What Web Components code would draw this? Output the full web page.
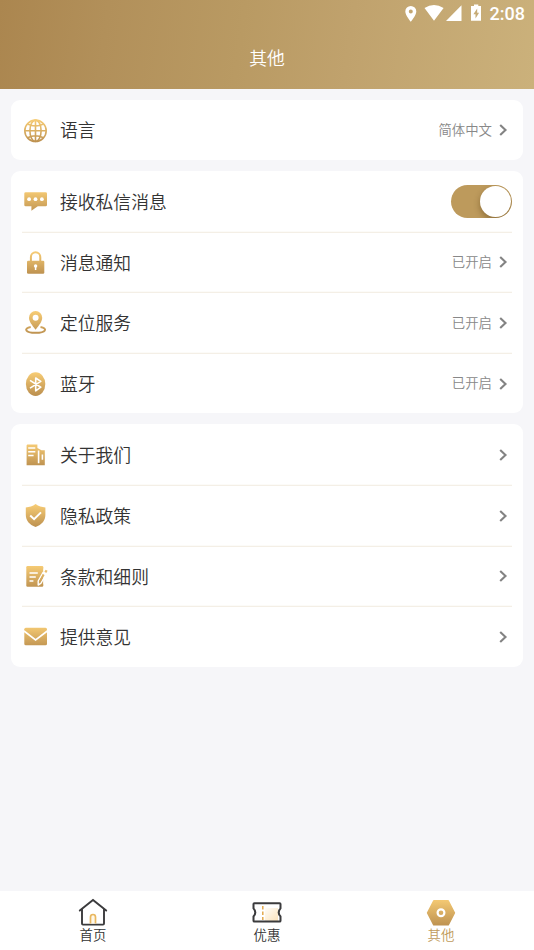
<!DOCTYPE html>
<html lang="zh-CN">
<head>
<meta charset="utf-8">
<title>其他</title>
<style>
html,body{margin:0;height:100%}
body{font-family:"Noto Sans CJK SC DemiLight","Noto Sans CJK SC","Noto Sans",sans-serif;font-weight:350;color:#333;overflow:hidden}
</style>
</head>
<body>
<app-screen>
  <app-header slot="top" heading="其他"></app-header>
  <settings-card>
    <settings-row icon="globe" value="简体中文" arrow>语言</settings-row>
  </settings-card>
  <settings-card>
    <settings-row icon="chat">接收私信消息<toggle-switch slot="end"></toggle-switch></settings-row>
    <settings-row icon="lock" value="已开启" arrow>消息通知</settings-row>
    <settings-row icon="pin" value="已开启" arrow>定位服务</settings-row>
    <settings-row icon="bluetooth" value="已开启" arrow>蓝牙</settings-row>
  </settings-card>
  <settings-card>
    <settings-row icon="building" arrow>关于我们</settings-row>
    <settings-row icon="shield" arrow>隐私政策</settings-row>
    <settings-row icon="notes" arrow>条款和细则</settings-row>
    <settings-row icon="mail" arrow>提供意见</settings-row>
  </settings-card>
  <tab-bar slot="bottom">
    <tab-item icon="home">首页</tab-item>
    <tab-item icon="ticket">优惠</tab-item>
    <tab-item icon="hex" active>其他</tab-item>
  </tab-bar>
</app-screen>
<script>
const G = 'url(#g)';
const ICONS = {
  globe: [23,23,`<g fill="none" stroke="${G}" stroke-width="1.6"><circle cx="11.5" cy="11.8" r="10.7"/><ellipse cx="11.5" cy="11.8" rx="5.6" ry="10.7"/><path d="M11.5 1.3V22.5M.8 11.8H22.2M3.6 5Q11.5 9 19.4 5M3.6 18.8Q11.5 14.8 19.4 18.8"/></g>`],
  chat: [23,23,`<path fill="${G}" d="M1.7 2.2H21.6Q23 2.2 23 3.6V15Q23 16.3 21.6 16.3H13.8L7.4 20.8V16.3H1.7Q.3 16.3 .3 15V3.6Q.3 2.2 1.7 2.2Z"/><g fill="#fff"><circle cx="5.1" cy="9.2" r="1.9"/><circle cx="11.5" cy="9.2" r="1.9"/><circle cx="17.9" cy="9.2" r="1.9"/></g>`],
  lock: [23,23,`<path fill="none" stroke="${G}" stroke-width="2" d="M6.9 11V6.2a4.7 4.9 0 0 1 9.4 0V11"/><rect x="3" y="9.8" width="17.3" height="12.9" rx="1.3" fill="${G}"/><circle cx="11.6" cy="15" r="1.7" fill="#fff"/><path d="M11.6 15v4" stroke="#fff" stroke-width="1.5"/>`],
  pin: [23,23,`<path fill="none" stroke="${G}" stroke-width="2" d="M6.7 16.1C-.7 17.4 1 21.8 11.6 21.8S24 17.4 16.5 16.1"/><path fill="${G}" fill-rule="evenodd" d="M11.6.1A6.6 6.6 0 0 0 5 6.7C5 10.6 8 13.9 11.6 18.7C15.2 13.9 18.2 10.6 18.2 6.7A6.6 6.6 0 0 0 11.6.1ZM11.6 3.8a3 3 0 1 1 0 6a3 3 0 0 1 0-6Z"/>`],
  bluetooth: [23,23,`<ellipse cx="11.6" cy="12.1" rx="9.7" ry="11.8" fill="${G}"/><path fill="none" stroke="#fff" stroke-width="1.6" stroke-linejoin="round" d="M6 8.4L16.8 15.2L11.7 18.8V6L16.8 9.3L6 16.2"/>`],
  building: [23,23,`<path fill="${G}" d="M3.3 1.6H13.4V5L17.5 7.3H20.8V22.3H2.6V2.3Z"/><path stroke="#fff" stroke-width="1.6" fill="none" d="M4.2 5H11.3M4.2 8.7H11.3M4.2 12.5H9.6M14.6 7.5V20.3M18.4 11.4V16.7"/>`],
  shield: [23,23,`<path fill="${G}" d="M11.6.1C14.5 2.4 18 3.2 21.4 3.4V10.7C21.4 16.6 18 20.4 11.6 23.1C5.2 20.4 1.8 16.6 1.8 10.7V3.4C5.2 3.2 8.7 2.4 11.6.1Z"/><path fill="none" stroke="#fff" stroke-width="2" d="M6.2 11.5L10.1 15.2L17 8.4"/>`],
  notes: [23,23,`<rect x="2.3" y="1" width="17" height="20.8" rx="1.2" fill="${G}"/><path stroke="#fff" stroke-width="1.6" d="M5.5 8H13.8M5.5 12H11.8M5.5 16H9.4"/><path fill="#fff" d="M19.5 4L23 5.5V13L19.4 19.5Z"/><path fill="none" stroke="#fff" stroke-width="1.4" stroke-linejoin="round" d="M19 7.5L14.2 16V20.1L17 18.1L21.8 9.3Z"/><path fill="${G}" d="M18.9 9.1L20.6 10.1L16.6 17.3L15.1 18.3L15.2 15.9ZM21.6 4.7L23.6 5.8L22.3 7.9L20.4 6.8Z"/>`],
  mail: [23,23,`<rect x=".3" y="2.8" width="22.7" height="17.4" rx="1.5" fill="${G}"/><path fill="none" stroke="#fff" stroke-width="1.6" d="M0 6L11.6 15L23.3 6"/>`],
  home: [30,28,`<g fill="none" stroke="#3b3b3d" stroke-width="1.9"><path stroke-linecap="round" d="M1.8 12.6L15 2L28.2 12.6"/><path d="M4 11V25.6Q4 26.6 5 26.6H25Q26 26.6 26 25.6V11"/></g><path fill="#fff8e8" stroke="#e9b75f" stroke-width="1.7" d="M12.5 25.6V19a2.5 2.5 0 0 1 5 0V25.6"/>`],
  ticket: [30,28,`<defs><linearGradient id="soft" x1="1" y1="1" x2="0" y2="0"><stop stop-color="#fbe3bc"/><stop offset="1" stop-color="#fffdf9"/></linearGradient></defs><path fill="url(#soft)" d="M13 10H26V23H13Z"/><path fill="none" stroke="#3b3b3d" stroke-width="2" stroke-linejoin="round" d="M2.4 5.2H27.6Q28.5 5.2 28.5 6.1V10.4Q24.9 14.4 28.5 18.4V22.7Q28.5 23.6 27.6 23.6H2.4Q1.5 23.6 1.5 22.7V18.4Q5.1 14.4 1.5 10.4V6.1Q1.5 5.2 2.4 5.2Z"/><path stroke="#e3a94d" stroke-width="1.5" stroke-dasharray="3.5 2" d="M10.8 8V22"/>`],
  hex: [30,28,`<path fill="${G}" stroke="${G}" stroke-width="1.5" stroke-linejoin="round" d="M7.8 2.8H22.2L28.4 14.8L22.2 26.8H7.8L1.6 14.8Z"/><circle cx="15" cy="14.8" r="3.4" fill="none" stroke="#fff" stroke-width="2.2"/>`],
  arrow: [10,14,`<path fill="none" stroke="#838383" stroke-width="2.1" d="M2.2 2L7.5 7L2.2 12"/>`]
};
function define(name, render){
  customElements.define(name, class extends HTMLElement{
    connectedCallback(){
      if(this.shadowRoot) return;
      const t=document.createElement('template');
      t.innerHTML=render(this);
      this.attachShadow({mode:'open'}).append(t.content.cloneNode(true));
    }
  });
}
define('ui-icon', el=>{
  const [w,h,body]=ICONS[el.getAttribute('name')];
  return `<style>:host{display:block;flex:none;width:${w}px;height:${h}px}svg{display:block;overflow:visible}</style>
  <svg width="${w}" height="${h}" viewBox="0 0 ${w} ${h}"><defs><linearGradient id="g" gradientUnits="userSpaceOnUse" x1="0" y1="1" x2="0" y2="${h}"><stop stop-color="#f6cb74"/><stop offset="1" stop-color="#bd9150"/></linearGradient></defs>${body}</svg>`;
});
define('app-screen', ()=>`<style>
:host{display:flex;flex-direction:column;height:950px;background:#f6f6f9}
main{flex:1;display:flex;flex-direction:column;gap:11px;padding:11px 11px 0}
</style><slot name="top"></slot><main><slot></slot></main><slot name="bottom"></slot>`);
define('status-bar', ()=>`<style>
:host{display:flex;justify-content:flex-end;height:27px;padding-right:9px;box-sizing:border-box;color:#fff;font:500 18px/28px Roboto,sans-serif}
svg{display:block;width:76px;height:27px;margin-right:9px;flex:none}
</style><svg viewBox="0 0 76 27" fill="#fff"><path fill-rule="evenodd" d="M5.8 6A5.5 5.5 0 0 0 .3 11.5C.3 15.3 5.8 21.7 5.8 21.7S11.3 15.3 11.3 11.5A5.5 5.5 0 0 0 5.8 6ZM5.8 9.5a2 2 0 1 1 0 4a2 2 0 0 1 0-4Z"/><path d="M19.5 8.1Q29 2 38.6 8.1L29 20.7ZM56.5 5.2V20.9H41Z"/><path fill-rule="evenodd" d="M69 4.4H73.3V6H76V20.8H66V6H69ZM72.2 8.4L68.4 14.2H70.5V18.6L74.1 12.8H72.2Z"/></svg><span>2:08</span>`);
define('app-header', el=>`<style>
:host{display:flex;flex-direction:column;height:89px;flex:none;background:linear-gradient(98deg,#ab864f 0%,#b2905a 20%,#b99a63 45%,#c0a26d 65%,#cbb17b 100%)}
h1{margin:0;height:62px;text-align:center;color:#fff;font-size:17.8px;font-weight:inherit;line-height:60px}
</style><status-bar></status-bar><h1>${el.getAttribute('heading')}</h1>`);
define('settings-card', ()=>`<style>
:host{display:block;background:#fff;border-radius:9px;padding:0 11px}
::slotted(:not(:first-child)){border-top:1px solid #f4efe6;box-shadow:0 -1px 0 #fcfbf8}
::slotted(:only-child){height:60px}
</style><slot></slot>`);
define('settings-row', el=>`<style>
:host{display:flex;align-items:center;box-sizing:border-box;height:60.6px;padding-left:2px;font-size:17.8px;line-height:26px}
.label{flex:1;margin-left:13px;padding-bottom:1.3px}
.value{font-size:13.4px;color:#888;line-height:20px;margin-right:6px;padding-bottom:2.4px}
.arrow{margin-right:4px}
</style><ui-icon name="${el.getAttribute('icon')}"></ui-icon><span class="label"><slot></slot></span>
${el.hasAttribute('value')?`<span class="value">${el.getAttribute('value')}</span>`:''}
${el.hasAttribute('arrow')?'<ui-icon class="arrow" name="arrow"></ui-icon>':''}<slot name="end"></slot>`);
define('toggle-switch', ()=>`<style>
:host{display:flex;justify-content:flex-end;align-items:center;box-sizing:border-box;width:61px;height:33px;margin-top:1px;padding:0 1px;border-radius:17px;background:#bd9a5c;overflow:hidden}
i{width:31px;height:31px;border-radius:50%;background:#fff;box-shadow:0 3px 6px rgba(70,45,5,.4)}
</style><i></i>`);
define('tab-bar', ()=>`<style>
:host{display:grid;grid-template-columns:174px 174px 174px;justify-content:center;flex:none;height:59px;background:#fff}
</style><slot></slot>`);
define('tab-item', el=>`<style>
:host{display:flex;flex-direction:column;align-items:center;padding-top:7px;font-size:13.4px;line-height:16px;color:${el.hasAttribute('active')?'#c09b5c':'#333'}}
</style><ui-icon name="${el.getAttribute('icon')}"></ui-icon><span><slot></slot></span>`);
</script>
</body>
</html>
